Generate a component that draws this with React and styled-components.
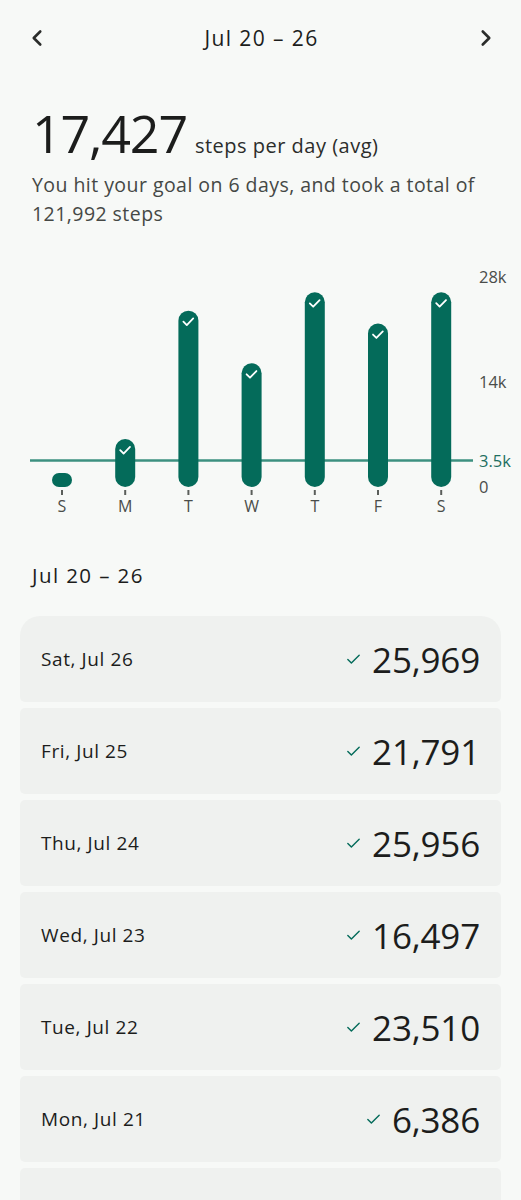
import styled, { createGlobalStyle } from "styled-components";
import { ChevronLeft, ChevronRight, Check } from "lucide-react";

const GlobalStyle = createGlobalStyle`
  body {
    margin: 0;
    background: #f7f9f7;
    font-family: "Open Sans", "Noto Sans", sans-serif;
    color: #1c1d1c;
  }
`;

const Page = styled.div`
  width: 521px;
  display: flex;
  flex-direction: column;
`;

const TopBar = styled.div`
  height: 76px;
  display: flex;
  align-items: center;
  justify-content: space-between;
  padding: 0 22px 0 24px;
`;

const NavButton = styled.button`
  border: 0;
  background: none;
  padding: 0;
  display: flex;
  color: #2b2d2b;
`;

const Title = styled.h1`
  margin: 0;
  font-size: 21px;
  font-weight: 500;
  letter-spacing: 1.4px;
`;

const Summary = styled.section`
  padding: 26px 32px 0;
`;

const AvgRow = styled.div`
  display: flex;
  align-items: baseline;
  gap: 8px;
`;

const AvgValue = styled.span`
  font-size: 52px;
  line-height: 62px;
  letter-spacing: -1.2px;
`;

const AvgUnit = styled.span`
  font-size: 20px;
  letter-spacing: 0.5px;
  color: #2b2d2b;
`;

const Note = styled.p`
  margin: 6px 0 0;
  font-size: 19.5px;
  line-height: 29px;
  letter-spacing: 0.45px;
  color: #454845;
`;

const Chart = styled.svg`
  display: block;
  margin-top: 27px;
`;

const SectionTitle = styled.h2`
  margin: 34px 0 0 32px;
  font-size: 20.5px;
  font-weight: 500;
  letter-spacing: 1.4px;
`;

const List = styled.ul`
  list-style: none;
  margin: 27px 20px 0;
  padding: 0;
  display: flex;
  flex-direction: column;
  gap: 6px;
`;

const Row = styled.li`
  height: 86px;
  background: #eff1ef;
  border-radius: ${(p) => (p.$first ? "20px 20px 5px 5px" : "5px")};
  display: flex;
  align-items: center;
  justify-content: space-between;
  padding: 0 21px;
`;

const RowDate = styled.span`
  font-size: 19px;
  font-weight: 500;
  letter-spacing: 0.6px;
`;

const RowValue = styled.span`
  display: flex;
  align-items: center;
  gap: 10px;
  font-size: 35px;
  letter-spacing: -0.2px;
  color: #1c1d1c;
`;

const GREEN = "#046b5a";
const TOP = 255;
const BASE = 487 - TOP;
const SCALE = 7.5 / 1000;

const week = [
  { label: "S", value: 1081 },
  { label: "M", value: 6386 },
  { label: "T", value: 23510 },
  { label: "W", value: 16497 },
  { label: "T", value: 25956 },
  { label: "F", value: 21791 },
  { label: "S", value: 25969 },
];

const days = [
  { date: "Sat, Jul 26", value: "25,969", hit: true },
  { date: "Fri, Jul 25", value: "21,791", hit: true },
  { date: "Thu, Jul 24", value: "25,956", hit: true },
  { date: "Wed, Jul 23", value: "16,497", hit: true },
  { date: "Tue, Jul 22", value: "23,510", hit: true },
  { date: "Mon, Jul 21", value: "6,386", hit: true },
  { date: "Sun, Jul 20", value: "1,081", hit: false },
];

const axis = [
  { text: "28k", y: 277 },
  { text: "14k", y: 382 },
  { text: "3.5k", y: 461, goal: true },
  { text: "0", y: 487 },
];

const StepsChart = () => (
  <Chart width="521" height="272" viewBox="0 0 521 272">
    <line x1="30" x2="473" y1={460.5 - TOP} y2={460.5 - TOP} stroke="#3d9080" strokeWidth="2.5" />
    {week.map((d, i) => {
      const cx = 62 + i * 63.2;
      const h = Math.max(14, d.value * SCALE);
      const hit = d.value >= 3500;
      return (
        <g key={i}>
          <rect x={cx - 10} y={BASE - h} width="20" height={h} rx={hit ? 10 : 7} fill={GREEN} />
          {hit && (
            <path
              d={`M${cx - 5} ${BASE - h + 11} l3.4 3.4 l6.4 -6.6`}
              fill="none"
              stroke="#fff"
              strokeWidth="1.8"
              strokeLinecap="round"
              strokeLinejoin="round"
            />
          )}
          <line x1={cx} x2={cx} y1={BASE + 3} y2={BASE + 8} stroke="#5b5e5b" strokeWidth="2" />
          <text x={cx} y={BASE + 25} textAnchor="middle" fontSize="16" fill="#4a4d4a" fontFamily="Open Sans, sans-serif">
            {d.label}
          </text>
        </g>
      );
    })}
    {axis.map((a) => (
      <text
        key={a.text}
        x="479"
        y={a.y - TOP + 6}
        fontSize="16.5"
        fill={a.goal ? "#1f6f61" : "#4a4d4a"}
        fontFamily="Open Sans, sans-serif"
      >
        {a.text}
      </text>
    ))}
  </Chart>
);

export default function App() {
  return (
    <Page>
      <GlobalStyle />
      <TopBar>
        <NavButton aria-label="Previous week">
          <ChevronLeft size={26} strokeWidth={2.4} />
        </NavButton>
        <Title>Jul 20 – 26</Title>
        <NavButton aria-label="Next week">
          <ChevronRight size={26} strokeWidth={2.4} />
        </NavButton>
      </TopBar>
      <Summary>
        <AvgRow>
          <AvgValue>17,427</AvgValue>
          <AvgUnit>steps per day (avg)</AvgUnit>
        </AvgRow>
        <Note>You hit your goal on 6 days, and took a total of 121,992 steps</Note>
      </Summary>
      <StepsChart />
      <SectionTitle>Jul 20 – 26</SectionTitle>
      <List>
        {days.map((d, i) => (
          <Row key={d.date} $first={i === 0}>
            <RowDate>{d.date}</RowDate>
            <RowValue>
              {d.hit && <Check size={17} strokeWidth={2} color={GREEN} />}
              {d.value}
            </RowValue>
          </Row>
        ))}
      </List>
    </Page>
  );
}
